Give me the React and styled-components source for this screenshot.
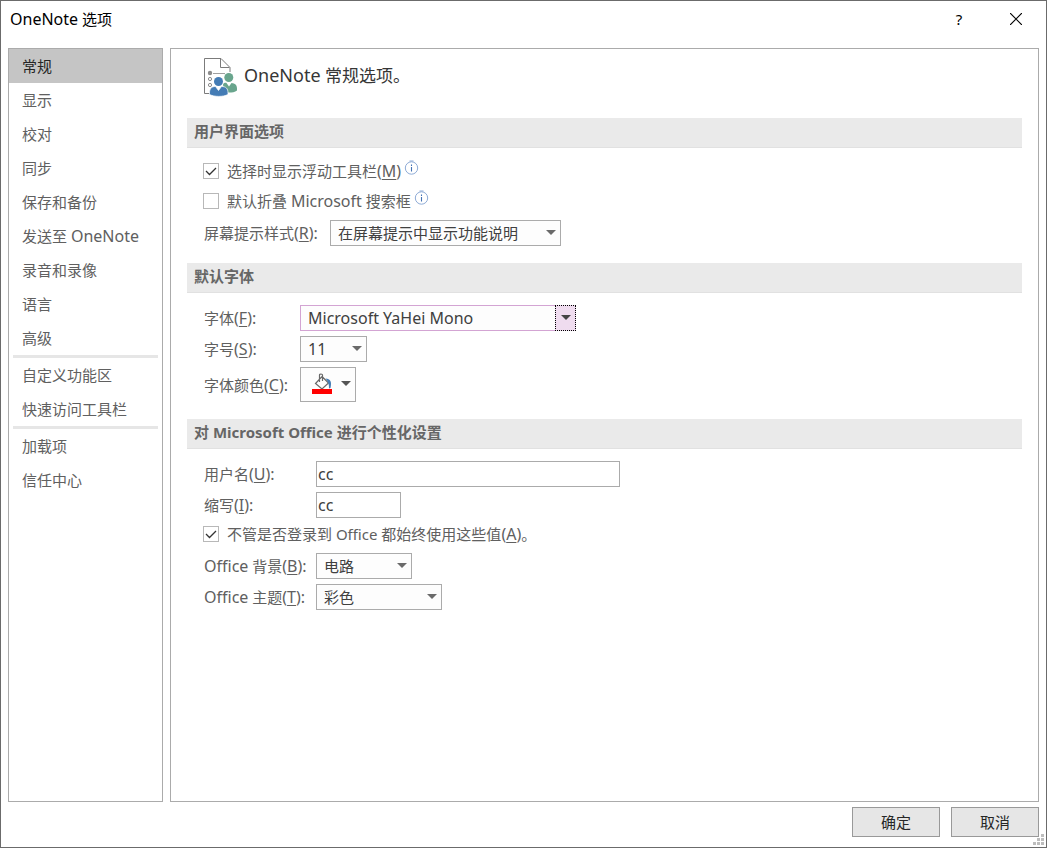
import React, { useState } from "react";
import styled, { createGlobalStyle } from "styled-components";

const GlobalStyle = createGlobalStyle`
  * {
    box-sizing: border-box;
  }

  body {
    margin: 0;
    background-color: #ffffff;
    color: #606060;
    font-family: "Noto Sans", "Noto Sans CJK SC", sans-serif;
    font-size: 15px;
    line-height: 20px;
  }

  button, input, select {
    font: inherit;
    color: inherit;
    margin: 0;
  }

  u {
    text-underline-offset: 2px;
  }
`;

// Latin words run slightly larger than the Chinese text around them
const Latin = styled.span`
  font-size: ${(props) => props.$size || 16}px;
  line-height: 16px;
`;

// Dialog window
const Window = styled.div`
  position: relative;
  display: flex;
  flex-direction: column;
  min-height: 100vh;
  padding: 0 7px 10px;
  border: 1px solid #6b6b6b;
`;

const TitleBar = styled.header`
  display: flex;
  align-items: center;
  justify-content: space-between;
  height: 47px;
  padding: 0 0 12px 2px;
  color: #000000;
`;

const WindowTitle = styled.h1`
  margin: 0;
  font-size: 15px;
  font-weight: 400;
`;

const WindowButtons = styled.div`
  display: flex;
`;

const WindowButton = styled.button`
  display: flex;
  align-items: center;
  justify-content: center;
  width: 46px;
  height: 30px;
  margin-left: 11px;
  padding: 0;
  border: none;
  background: none;
  color: #000000;
`;

// The two panels under the title bar
const Body = styled.div`
  flex: 1;
  display: flex;
  gap: 7px;
`;

const Sidebar = styled.nav`
  flex: 0 0 155px;
  border: 1px solid #ababab;
`;

const NavList = styled.ul`
  margin: 0;
  padding: 0;
  list-style: none;
`;

const NavLink = styled.a`
  display: flex;
  align-items: center;
  height: 34px;
  padding-left: 13px;
  background-color: ${(props) => (props.$active ? "#c5c5c5" : "transparent")};
  color: ${(props) => (props.$active ? "#262626" : "#606060")};
  text-decoration: none;
  white-space: pre;
`;

const NavDivider = styled.li`
  height: 3px;
  margin: 0 4px;
  background-color: #e6e6e6;
`;

const Content = styled.main`
  flex: 1;
  padding: 9px 16px;
  border: 1px solid #ababab;
`;

const PageHeading = styled.div`
  display: flex;
  align-items: flex-start;
  gap: 6px;
  height: 60px;
  padding-left: 17px;
`;

const PageTitle = styled.h2`
  margin: 0;
  color: #363636;
  font-size: 17px;
  font-weight: 400;
  line-height: 36px;
`;

const Section = styled.section`
  margin-bottom: 17px;
`;

const SectionTitle = styled.h3`
  height: 30px;
  margin: 0;
  padding-left: 7px;
  border-bottom: 1px solid #e1e1e1;
  background-color: #eaeaea;
  color: #666666;
  font-size: 15px;
  font-weight: 700;
  line-height: 26px;
`;

const Rows = styled.div`
  display: flex;
  flex-direction: column;
  gap: 5px;
  padding: 12px 0 0 16px;
`;

const Row = styled.div`
  display: flex;
  align-items: center;
`;

const Label = styled.label`
  flex: 0 0 ${(props) => props.$width}px;
  padding-left: 1px;
  white-space: nowrap;
`;

const CheckRow = styled.div`
  display: flex;
  align-items: center;
  height: 25px;
  padding-bottom: 3px;
`;

const CheckLabel = styled.label`
  display: flex;
  align-items: center;
  gap: 8px;
  white-space: nowrap;
`;

const CheckFrame = styled.span`
  position: relative;
  width: 16px;
  height: 16px;

  svg {
    position: absolute;
    inset: 0;
    pointer-events: none;
  }
`;

const Checkbox = styled.input`
  display: block;
  width: 16px;
  height: 16px;
  border: 1px solid #b8b8b8;
  background-color: #ffffff;
  appearance: none;
`;

const InfoSvg = styled.svg`
  margin: 0 0 8px 3px;
`;

const SelectFrame = styled.div`
  position: relative;
  width: ${(props) => props.$width}px;
  height: 26px;
`;

const SelectBox = styled.select`
  display: block;
  width: 100%;
  height: 100%;
  padding: 0 24px 0 7px;
  border: 1px solid ${(props) => (props.$focused ? "#d3a4d3" : "#ababab")};
  border-radius: 0;
  outline: none;
  background-color: #fdfdfd;
  color: #404040;
  font-size: ${(props) => (props.$latin ? 16 : 15)}px;
  appearance: none;
`;

const SelectArrow = styled.span`
  position: absolute;
  top: 0;
  right: 0;
  display: flex;
  align-items: center;
  justify-content: center;
  width: 21px;
  height: 100%;
  padding-bottom: 2px;
  border: ${(props) => (props.$focused ? "1px dotted #000000" : "none")};
  background-color: ${(props) => (props.$focused ? "#efdcef" : "transparent")};
  color: ${(props) => (props.$focused ? "#444444" : "#6a6a6a")};
  pointer-events: none;
`;

const ColorButton = styled.button`
  display: flex;
  align-items: center;
  gap: 8px;
  width: 56px;
  height: 35px;
  padding: 0 0 2px 10px;
  border: 1px solid #ababab;
  background-color: #fdfdfd;
  color: #555555;
`;

const TextBox = styled.input`
  width: ${(props) => props.$width}px;
  height: 26px;
  padding: 0 1px;
  border: 1px solid #ababab;
  outline: none;
  background-color: #ffffff;
  color: #404040;
  font-size: 16px;
`;

const Footer = styled.footer`
  display: flex;
  justify-content: flex-end;
  gap: 11px;
  padding-top: 5px;
`;

const DialogButton = styled.button`
  width: 88px;
  height: 30px;
  padding: 0;
  border: 1px solid #999999;
  background-color: #e6e6e6;
  color: #262626;
`;

const Grip = styled.svg`
  position: absolute;
  right: 2px;
  bottom: 2px;
`;

const Caret = () => (
  <svg width="10" height="5" viewBox="0 0 10 5" aria-hidden="true">
    <path d="M0 0h10L5 5z" fill="currentColor" />
  </svg>
);

const InfoIcon = () => (
  <InfoSvg width="15" height="15" viewBox="0 0 15 15" aria-hidden="true">
    <circle cx="7.5" cy="8" r="6.2" fill="none" stroke="#8eabd6" />
    <path d="M5.5 1h4" stroke="#8eabd6" />
    <path d="M7.5 4.5v1.500M7.5 7v4.500" stroke="#4472b4" strokeWidth="1.1" />
  </InfoSvg>
);

// Sheet with a list and two people in front of it
const PageIcon = () => (
  <svg width="34" height="39" viewBox="0 0 34 39" aria-hidden="true">
    <path
      d="M6 35.5H.5v-35h16.500l9 9V14M16.500 .5v9h9"
      fill="none"
      stroke="#7b7b7b"
    />
    <circle cx="6" cy="15" r="2.2" fill="#8c8c8c" />
    <path d="M9 15.5h12" stroke="#a0a0a0" />
    <circle cx="6" cy="21" r="1.6" fill="none" stroke="#8c8c8c" />
    <circle cx="6" cy="27" r="1.6" fill="none" stroke="#8c8c8c" />
    <circle cx="24.800" cy="19.500" r="4.500" fill="#69a58d" />
    <path
      d="M18.500 26c2-1.300 3-1.300 4-1l2.500 3.500 2.500-3.500c3.500 .2 5.500 2.200 5.500 5.500v2c-2 1.700-5 2-8 2h-3z"
      fill="#69a58d"
    />
    <circle cx="14.500" cy="23.500" r="5.400" fill="#ffffff" />
    <circle cx="14.500" cy="23.500" r="4.500" fill="#447cb5" />
    <path
      d="M5.500 35c0-4.500 2-6.500 6-6.500l3 4 3-4c4.500 0 6.500 2 6.500 6.500v1.500c-5 2.500-13.500 2.500-18.500 0z"
      fill="#447cb5"
      stroke="#ffffff"
      strokeWidth=".7"
    />
  </svg>
);

const BucketIcon = ({ color }) => (
  <svg width="22" height="22" viewBox="0 0 22 22" aria-hidden="true">
    <path
      d="M11 3.500l6.500 6.500-6.500 6-6.500-5.500zM8.500 9V2q0-1 1.500-1t1.500 1v6"
      fill="none"
      stroke="#686868"
      strokeWidth="1.200"
    />
    <path
      d="M14.500 5.500c5 .2 6.500 3 5 9.500l-1.500 .5c.2-4-.7-7-3.500-10z"
      fill="#447cb5"
    />
    <path d="M1 16h20v5H1z" fill={color} />
  </svg>
);

// Underlined access key in brackets, followed by any closing colon
const Key = ({ letter, end = "" }) => (
  <Latin>
    (<u>{letter}</u>){end}
  </Latin>
);

const CheckOption = ({ children, defaultChecked = false, info }) => {
  const [checked, setChecked] = useState(defaultChecked);

  return (
    <CheckRow>
      <CheckLabel>
        <CheckFrame>
          <Checkbox
            type="checkbox"
            checked={checked}
            onChange={(e) => setChecked(e.target.checked)}
          />
          {checked && (
            <svg width="16" height="16" viewBox="0 0 16 16" aria-hidden="true">
              <path
                d="M3 8l3.500 3.500L13 5"
                fill="none"
                stroke="#333333"
                strokeWidth="1.300"
              />
            </svg>
          )}
        </CheckFrame>
        <span>{children}</span>
      </CheckLabel>
      {info && <InfoIcon />}
    </CheckRow>
  );
};

const SelectField = ({ id, width, options, focused, latin }) => (
  <SelectFrame $width={width}>
    <SelectBox id={id} $focused={focused} $latin={latin}>
      {options.map((option) => (
        <option key={option}>{option}</option>
      ))}
    </SelectBox>
    <SelectArrow $focused={focused}>
      <Caret />
    </SelectArrow>
  </SelectFrame>
);

// Sidebar entries, one array for each group between dividers
const navGroups = [
  [
    { text: "常规" },
    { text: "显示" },
    { text: "校对" },
    { text: "同步" },
    { text: "保存和备份" },
    { text: "发送至 ", latin: "OneNote" },
    { text: "录音和录像" },
    { text: "语言" },
    { text: "高级" },
  ],
  [{ text: "自定义功能区" }, { text: "快速访问工具栏" }],
  [{ text: "加载项" }, { text: "信任中心" }],
];

const App = () => {
  const [active, setActive] = useState("常规");
  const [userName, setUserName] = useState("cc");
  const [initials, setInitials] = useState("cc");

  return (
    <>
      <GlobalStyle />
      <Window>
        <TitleBar>
          <WindowTitle>
            <Latin>OneNote</Latin> 选项
          </WindowTitle>
          <WindowButtons>
            <WindowButton type="button">?</WindowButton>
            <WindowButton type="button" aria-label="关闭">
              <svg width="12" height="12" viewBox="0 0 12 12">
                <path d="M0 0l12 12M12 0L0 12" stroke="#000000" strokeWidth="1.200" />
              </svg>
            </WindowButton>
          </WindowButtons>
        </TitleBar>

        <Body>
          <Sidebar>
            <NavList>
              {navGroups.map((group, index) => (
                <React.Fragment key={group[0].text}>
                  {index > 0 && <NavDivider />}
                  {group.map((item) => (
                    <li key={item.text}>
                      <NavLink
                        href="#"
                        $active={item.text === active}
                        onClick={() => setActive(item.text)}
                      >
                        {item.text}
                        {item.latin && <Latin>{item.latin}</Latin>}
                      </NavLink>
                    </li>
                  ))}
                </React.Fragment>
              ))}
            </NavList>
          </Sidebar>

          <Content>
            <PageHeading>
              <PageIcon />
              <PageTitle>
                <Latin $size={18}>OneNote</Latin> 常规选项。
              </PageTitle>
            </PageHeading>

            <Section>
              <SectionTitle>用户界面选项</SectionTitle>
              <Rows>
                <CheckOption defaultChecked info>
                  选择时显示浮动工具栏
                  <Key letter="M" />
                </CheckOption>
                <CheckOption info>
                  默认折叠 <Latin>Microsoft</Latin> 搜索框
                </CheckOption>
                <Row>
                  <Label htmlFor="tips" $width={127}>
                    屏幕提示样式
                    <Key letter="R" end=":" />
                  </Label>
                  <SelectField
                    id="tips"
                    width={231}
                    options={["在屏幕提示中显示功能说明"]}
                  />
                </Row>
              </Rows>
            </Section>

            <Section>
              <SectionTitle>默认字体</SectionTitle>
              <Rows>
                <Row>
                  <Label htmlFor="font" $width={97}>
                    字体
                    <Key letter="F" end=":" />
                  </Label>
                  <SelectField
                    id="font"
                    width={276}
                    options={["Microsoft YaHei Mono"]}
                    focused
                    latin
                  />
                </Row>
                <Row>
                  <Label htmlFor="size" $width={97}>
                    字号
                    <Key letter="S" end=":" />
                  </Label>
                  <SelectField id="size" width={67} options={["11"]} latin />
                </Row>
                <Row>
                  <Label htmlFor="color" $width={97}>
                    字体颜色
                    <Key letter="C" end=":" />
                  </Label>
                  <ColorButton type="button" id="color">
                    <BucketIcon color="#ff0000" />
                    <Caret />
                  </ColorButton>
                </Row>
              </Rows>
            </Section>

            <Section>
              <SectionTitle>对 Microsoft Office 进行个性化设置</SectionTitle>
              <Rows>
                <Row>
                  <Label htmlFor="user" $width={113}>
                    用户名
                    <Key letter="U" end=":" />
                  </Label>
                  <TextBox
                    id="user"
                    type="text"
                    $width={304}
                    value={userName}
                    onChange={(e) => setUserName(e.target.value)}
                  />
                </Row>
                <Row>
                  <Label htmlFor="initials" $width={113}>
                    缩写
                    <Key letter="I" end=":" />
                  </Label>
                  <TextBox
                    id="initials"
                    type="text"
                    $width={85}
                    value={initials}
                    onChange={(e) => setInitials(e.target.value)}
                  />
                </Row>
                <CheckOption defaultChecked>
                  不管是否登录到 Office 都始终使用这些值
                  <Key letter="A" />。
                </CheckOption>
                <Row>
                  <Label htmlFor="background" $width={113}>
                    <Latin>Office</Latin> 背景
                    <Key letter="B" end=":" />
                  </Label>
                  <SelectField id="background" width={96} options={["电路"]} />
                </Row>
                <Row>
                  <Label htmlFor="theme" $width={113}>
                    <Latin>Office</Latin> 主题
                    <Key letter="T" end=":" />
                  </Label>
                  <SelectField id="theme" width={126} options={["彩色"]} />
                </Row>
              </Rows>
            </Section>
          </Content>
        </Body>

        <Footer>
          <DialogButton type="button">确定</DialogButton>
          <DialogButton type="button">取消</DialogButton>
        </Footer>

        <Grip width="11" height="11" viewBox="0 0 11 11" aria-hidden="true">
          <path
            d="M8 0h3v3H8zM4 4h3v3H4zM8 4h3v3H8zM0 8h3v3H0zM4 8h3v3H4zM8 8h3v3H8z"
            fill="#bdbdbd"
          />
        </Grip>
      </Window>
    </>
  );
};

export default App;
